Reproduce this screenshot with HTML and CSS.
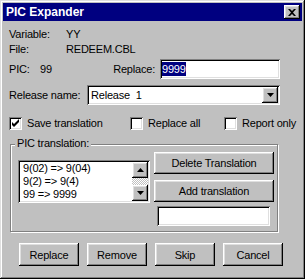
FILE: index.html
```html
<!DOCTYPE html>
<html lang="en">
<head>
    <meta charset="UTF-8">
    <title>PIC Expander</title>
    <link rel="stylesheet" href="styles.css">
</head>
<body>

<div class="window">
    <!-- Title bar -->
    <div class="titlebar">
        <span class="title">PIC Expander</span>
        <div class="close-btn">
            <svg width="8" height="7" viewBox="0 0 8 7"><path d="M0 0h2l2 2 2-2h2L5 3.5 8 7H6L4 5 2 7H0l3-3.5z" fill="#000"/></svg>
        </div>
    </div>

    <div class="client">
        <div class="info-row first"><span class="info-label">Variable:</span><span>YY</span></div>
        <div class="info-row"><span class="info-label">File:</span><span>REDEEM.CBL</span></div>

        <div class="pic-row">
            <span class="pic-label">PIC:</span>
            <span class="pic-value">99</span>
            <span class="replace-label">Replace:</span>
            <div class="field replace-field"><span class="selected">9999</span></div>
        </div>

        <div class="release-row">
            <span class="release-label">Release name:</span>
            <div class="field combo">
                <span class="combo-text">Release  1</span>
                <div class="arrow-btn">
                    <svg width="7" height="4" viewBox="0 0 7 4"><path d="M0 0h7L3.5 4z" fill="#000"/></svg>
                </div>
            </div>
        </div>

        <div class="check-row">
            <div class="check">
                <div class="field check-box">
                    <svg width="9" height="9" viewBox="0 0 9 9"><path d="M1 3v3l2 2 5-5V0L3 5z" fill="#000"/></svg>
                </div>
                <span>Save translation</span>
            </div>
            <div class="check">
                <div class="field check-box"></div>
                <span>Replace all</span>
            </div>
            <div class="check">
                <div class="field check-box"></div>
                <span>Report only</span>
            </div>
        </div>

        <!-- PIC translation group -->
        <div class="group">
            <span class="group-title">PIC translation:</span>
            <div class="field listbox">
                <ul class="list-items">
                    <li>9(02) =&gt; 9(04)</li>
                    <li>9(2) =&gt; 9(4)</li>
                    <li>99 =&gt; 9999</li>
                </ul>
                <div class="scrollbar">
                    <div class="arrow-btn">
                        <svg width="7" height="4" viewBox="0 0 7 4"><path d="M0 4h7L3.5 0z" fill="#000"/></svg>
                    </div>
                    <div class="track"></div>
                    <div class="arrow-btn">
                        <svg width="7" height="4" viewBox="0 0 7 4"><path d="M0 0h7L3.5 4z" fill="#000"/></svg>
                    </div>
                </div>
            </div>
            <div class="group-actions">
                <div class="btn">Delete Translation</div>
                <div class="btn">Add translation</div>
                <div class="field new-field"></div>
            </div>
        </div>

        <div class="button-row">
            <div class="btn">Replace</div>
            <div class="btn">Remove</div>
            <div class="btn">Skip</div>
            <div class="btn">Cancel</div>
        </div>
    </div>
</div>

</body>
</html>
```

FILE: styles.css
```css
body {
    margin: 0;
    font-family: "Liberation Sans", Arial, sans-serif;
    font-size: 11px;
    letter-spacing: -0.2px;
    color: #000;
}
.window {
    width: 305px;
    height: 279px;
    box-sizing: border-box;
    padding: 3px;
    background-color: #c0c0c0;
    box-shadow: inset -1px -1px #000, inset 1px 1px #dfdfdf, inset -2px -2px #808080, inset 2px 2px #fff;
}
.titlebar {
    height: 18px;
    display: flex;
    align-items: center;
    justify-content: space-between;
    padding: 0 2px 0 3px;
    background-color: #000080;
    color: #fff;
    font-weight: bold;
    font-size: 12px;
    letter-spacing: 0;
}
.close-btn {
    width: 16px;
    height: 14px;
    box-sizing: border-box;
    display: flex;
    align-items: center;
    justify-content: center;
    background-color: #c0c0c0;
    box-shadow: inset -1px -1px #000, inset 1px 1px #fff, inset -2px -2px #808080, inset 2px 2px #dfdfdf;
}
.client {
    display: flex;
    flex-direction: column;
    padding-left: 6px;
}
.field {
    box-sizing: border-box;
    background-color: #fff;
    box-shadow: inset 1px 1px #808080, inset -1px -1px #fff, inset 2px 2px #000, inset -2px -2px #dfdfdf;
}
.btn, .arrow-btn {
    box-sizing: border-box;
    display: flex;
    align-items: center;
    justify-content: center;
    background-color: #c0c0c0;
    box-shadow: inset -1px -1px #000, inset 1px 1px #fff, inset -2px -2px #808080, inset 2px 2px #dfdfdf;
}
.info-row {
    height: 15px;
    display: flex;
    align-items: center;
}
.info-row.first {
    margin-top: 5px;
}
.info-label {
    width: 57px;
}
.pic-row {
    width: 271px;
    height: 20px;
    margin-top: 3px;
    display: flex;
    align-items: center;
}
.pic-label {
    width: 31px;
}
.pic-value {
    flex: 1;
}
.replace-label {
    margin-right: 5px;
}
.replace-field {
    width: 120px;
    height: 20px;
    display: flex;
    align-items: center;
    padding-left: 2px;
}
.selected {
    background-color: #000080;
    color: #fff;
    line-height: 14px;
}
.release-row {
    width: 271px;
    height: 20px;
    margin-top: 6px;
    display: flex;
    align-items: center;
}
.release-label {
    width: 78px;
}
.combo {
    width: 193px;
    height: 20px;
    display: flex;
    align-items: center;
    padding: 2px;
}
.combo-text {
    flex: 1;
    padding-left: 2px;
    white-space: pre;
}
.arrow-btn {
    width: 16px;
    height: 16px;
}
.check-row {
    height: 14px;
    margin-top: 11px;
    display: grid;
    grid-template-columns: 121px 94px auto;
    align-items: center;
}
.check {
    display: flex;
    align-items: center;
    gap: 5px;
}
.check-box {
    width: 13px;
    height: 13px;
    display: flex;
    align-items: center;
    justify-content: center;
}
.group {
    position: relative;
    width: 268px;
    box-sizing: border-box;
    margin: 14px 0 0 1px;
    padding: 7px 0 5px 7px;
    display: flex;
    border: 1px solid #808080;
    box-shadow: 1px 1px 0 #fff, inset 1px 1px #fff;
}
.group-title {
    position: absolute;
    top: -8px;
    left: 4px;
    padding: 0 2px;
    background-color: #c0c0c0;
    line-height: 13px;
}
.listbox {
    width: 132px;
    height: 43px;
    margin-top: 8px;
    padding: 2px;
    display: flex;
}
.list-items {
    flex: 1;
    list-style-type: none;
    margin: 0;
    padding: 0 0 0 3px;
}
.list-items li {
    line-height: 13px;
}
.scrollbar {
    width: 16px;
    display: flex;
    flex-direction: column;
}
.track {
    flex: 1;
    background: repeating-conic-gradient(#c0c0c0 0 25%, #fff 0 50%) 0 0 / 2px 2px;
}
.group-actions {
    width: 120px;
    margin-left: 4px;
    display: flex;
    flex-direction: column;
}
.group-actions .btn {
    height: 22px;
}
.group-actions .btn + .btn {
    margin-top: 6px;
}
.new-field {
    width: 113px;
    height: 20px;
    margin: 4px 0 0 3px;
}
.button-row {
    display: flex;
    gap: 8px;
    margin-top: 11px;
    padding-left: 10px;
}
.button-row .btn {
    width: 60px;
    height: 23px;
}
```
